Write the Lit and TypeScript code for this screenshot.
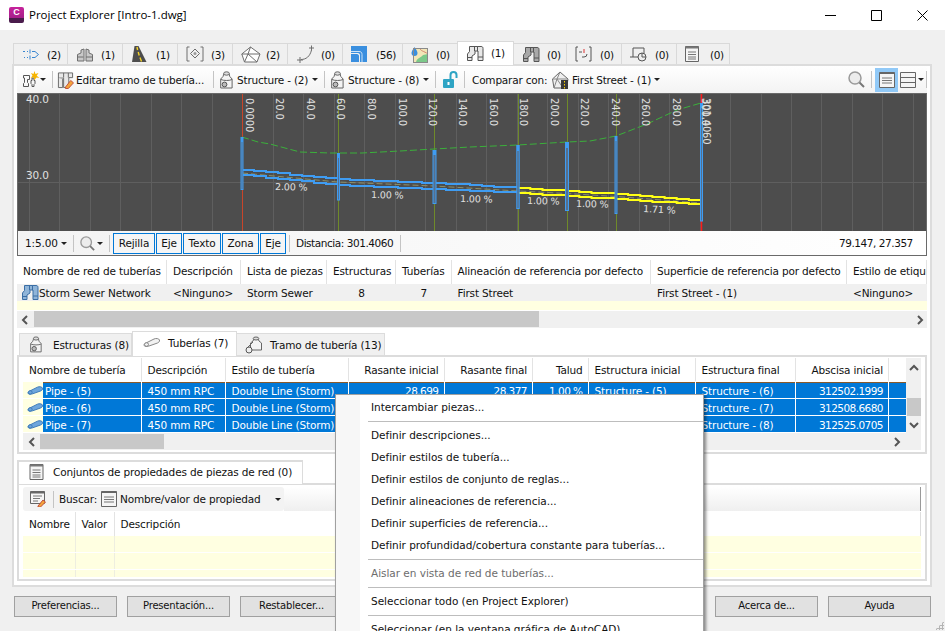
import { LitElement, html, svg, css } from "lit";
import { customElement } from "lit/decorators.js";

const G = "#6e6e6e";

const iAlign = () => html`<svg class="ic" width="18" height="16" viewBox="0 0 18 16"><g fill="none" stroke="#3a86d0"><path d="M1 5.500h2M5 5.500h1M8 3.500v4M10 5.500h3l3.500 3-3.500 3h-3M6 11.500h-1M3 11.500h-1M8 9.500v4"/></g></svg>`;
const iParcel = () => html`<svg class="ic" width="18" height="18" viewBox="0 0 18 18"><g fill="#c9c9c9" stroke="${G}"><path d="M1.500 9.500 5 8V5l3-1v12H1.500z"/><path d="M16.500 9.500 13 8V5l-3-1v12h6.500z"/></g><path d="M1.500 12h6M10 12h6.500" stroke="${G}"/></svg>`;
const iRoad = () => html`<svg class="ic" width="16" height="18" viewBox="0 0 16 18"><path d="M1 17 3.500 1h4l8 16z" fill="#4d4d4d"/><path d="M6 2l.6 3M7.200 7l1 3.500M9 12.500l1.500 4" stroke="#f5d327" stroke-width="1.400"/></svg>`;
const iPoints = () => html`<svg class="ic" width="18" height="16" viewBox="0 0 18 16"><g fill="none" stroke="${G}"><path d="M3.500 1H1v14h2.500M14.500 1H17v14h-2.500"/><path d="M9 3l4.500 4.500L9 12 4.500 7.500z"/></g><circle cx="9" cy="7.500" r="1.500" fill="#999"/></svg>`;
const iSurf = () => html`<svg class="ic" width="20" height="17" viewBox="0 0 20 17"><path d="M9.500 1 19 8l-3 8H3.500L.8 8zM.8 8h18M9.500 1 7 8l-3.500 8M7 8l9 8" fill="#fff" stroke="${G}"/></svg>`;
const iCurve = () => html`<svg class="ic" width="20" height="18" viewBox="0 0 20 18"><path d="M5 14.500c5 0 9-3 10.500-9.500" fill="none" stroke="${G}"/><path d="M1 15h6M4 12v6M13 3h5M15.500 .5v5" stroke="${G}"/></svg>`;
const iCorner = () => html`<svg class="ic" width="16" height="16" viewBox="0 0 16 16"><path d="M0 0h16v16H9V9c0-1-1-2-2-2H0z" fill="#3a8fdf"/><path d="M0 8h6c1 0 2 1 2 2v6H0z" fill="#3a8fdf"/><path d="M0 5.500h8c2 0 3 1 3 3v7.500" fill="none" stroke="#cfe4f7"/></svg>`;
const iMap = () => html`<svg class="ic" width="17" height="18" viewBox="0 0 17 18"><rect x="2" y="3" width="15" height="15" fill="#f2e6b8"/><path d="M5 18c0-5 5-5 7-8l5-1v9z" fill="#7cc98a"/><path d="M9 3c0 3 4 3 8 6" fill="none" stroke="#d58870"/><path d="M3.500 2S.5 6 .5 8a3 3 0 0 0 6 0c0-2-3-6-3-6z" fill="#3a8fdf"/><rect x="2.500" y="3.500" width="14" height="14" fill="none" stroke="#8a8a8a"/></svg>`;
const iNet = (c = "#b0b0b0", s = "#555") => html`<svg class="ic" width="18" height="17" viewBox="0 0 18 17"><g fill=${c} stroke=${s}><path d="M3.500 1.500H12.500V6H9V9L6 11v4.500H1.500V9L3.500 6.500z"/><path d="M11.500 1.500H15c1.500 0 2 .7 2 2v12h-5V6h-.5z"/></g><path d="M1.500 12.500H6M12 12H17M8.500 1.500V6" stroke=${s} fill="none"/></svg>`;
const iBrk = () => html`<svg class="ic" width="17" height="16" viewBox="0 0 17 16"><path d="M3 1H1v14h2M14 1h2v14h-2M4 6h3" fill="none" stroke="#555"/><path d="M12 8a3 3 0 0 1-3 3H7" fill="none" stroke="#555"/><path d="M9 3v4" stroke="#d33"/></svg>`;
const iMon = () => html`<svg class="ic" width="17" height="15" viewBox="0 0 17 15"><path d="M3 10V1h11v5M0 10h8" fill="none" stroke="#555"/><circle cx="12" cy="10" r="4" fill="#eee" stroke="#555"/><path d="M12 6v4h4" stroke="#555" fill="none"/></svg>`;
const iDoc = (w = 14, h = 16) => html`<svg class="ic" width=${w} height=${h} viewBox="0 0 14 16"><path d="M.5.500h13v15H.500z" fill="#f5f5f5" stroke="#666"/><path d="M.5.500h13v2H.500z" fill="#777"/><path d="M3 6h8M3 8.500h8M3 11h8M3 13h8" stroke="#777"/></svg>`;
const iList = () => html`<svg class="ic" width="16" height="16" viewBox="0 0 16 16"><path d="M.5.500h15v15H.500z" fill="#f5f5f5" stroke="#666"/><path d="M.5.500h15v1.500H.500z" fill="#666"/><path d="M3 6h10M3 8.500h10M3 11h10" stroke="#777"/></svg>`;
const iStruct = (w = 13, h = 18) => html`<svg class="ic" width=${w} height=${h} viewBox="0 0 13 18"><path d="M4 2.500 3 5.500.7 8v9h11.400V8L9.800 5.500 9 2.500z" fill="#f4f4f4" stroke="#666"/><ellipse cx="6.500" cy="2.500" rx="2.800" ry="1.700" fill="#ddd" stroke="#666"/><path d="M1 8.500c2 1.300 9 1.300 11 0" fill="none" stroke="#666"/><circle cx="4.500" cy="13.500" r="2.400" fill="#bbb" stroke="#555"/></svg>`;
const iRun = () => html`<svg class="ic" width="20" height="18" viewBox="0 0 20 18"><path d="M9 2.500 8 5 5.500 7v7h11V7L14 5l-1-2.500z" fill="#f4f4f4" stroke="#666"/><ellipse cx="11" cy="2.500" rx="2.800" ry="1.500" fill="#ddd" stroke="#666"/><path d="M3 11l5-5" stroke="#666"/><circle cx="4" cy="14" r="3" fill="#eee" stroke="#555"/></svg>`;
const iPipe = (f = "#f2f2f2", s = "#888", w = 17, h = 9) => html`<svg class="ic" width=${w} height=${h} viewBox="0 0 17 9"><path d="M3 8.500C1 8.500.3 6.500 2 5.500L11 1c2-1 5-.5 5.500 1 .5 1.500-1 2.500-2 3L6 8z" fill=${f} stroke=${s}/><ellipse cx="3.500" cy="6.500" rx="2" ry="1.800" fill=${f} stroke=${s}/></svg>`;
const iNew = () => html`<svg class="ic" width="18" height="18" viewBox="0 0 18 18"><path d="M1.500 4.500h6v4H5.500v3l1 1v3h-5v-3l1-1V7h-1zM9 9.500h1V7h2v2.500h1v3l-1 1v2h-2v-2l-1-1z" fill="none" stroke="#555"/><path d="M12.500 0l1 3 3-1-1.800 2.700L17.500 7l-3-.5-2 2.500-1-2.700L8.500 7l2-2.300L9 2l2.500 1z" fill="#f7b500"/></svg>`;
const iEdit = () => html`<svg class="ic" width="17" height="18" viewBox="0 0 18 18"><path d="M1.500 1.500h15v5h-4V17H7V7H1.500z" fill="#e8e8e8" stroke="#666"/><path d="M1.500 7v10H6V8" fill="#e8e8e8" stroke="#666"/><path d="M7 1.500v5M12 1.500v5" stroke="#666"/><path d="M9 16.500l5.500-7 3 2.500-5.500 6H9z" fill="#f4a53b" stroke="#c04e3c"/></svg>`;
const iLock = () => html`<svg class="ic" width="15" height="17" viewBox="0 0 15 17"><rect x="0" y="8" width="11" height="9" rx="1" fill="#2ea4c4"/><path d="M7.500 8V4a3 3 0 0 1 6 0v3" fill="none" stroke="#2ea4c4" stroke-width="2"/><rect x="4.500" y="11" width="2" height="3" fill="#fff"/></svg>`;
const iComp = () => html`<svg class="ic" width="17" height="18" viewBox="0 0 17 18"><path d="M8 1 16 8l-1.500 9H2L.5 8z" fill="#eee" stroke="#666"/><path d="M.5 8h15M8 1 5 8l-3 9M5 8l6 9" fill="none" stroke="#888"/><rect x="9" y="9" width="7" height="9" fill="#3a3a3a"/><path d="M12.500 10v1.500M12.500 13v1.500M12.500 16v1.500" stroke="#ffd200"/></svg>`;
const iMag = (s = 17) => html`<svg class="ic" width=${s} height=${s} viewBox="0 0 17 17"><circle cx="7" cy="7" r="6" fill="#ececec" stroke="#9a9a9a" stroke-width="1.500"/><path d="M11.500 11.500 16 16" stroke="#777" stroke-width="2"/></svg>`;
const iEditList = () => html`<svg class="ic" width="18" height="16" viewBox="0 0 18 16"><path d="M.5.500h14v12H.500z" fill="#f5f5f5" stroke="#666"/><path d="M.5.500h14v2H.500z" fill="#666"/><path d="M3 5h9M3 7.500h7M3 10h5" stroke="#777"/><path d="M8 15l5-6 2.500 2-5 5H8z" fill="#f4a53b" stroke="#c04e3c"/></svg>`;
const iSplit = () => html`<svg class="ic" width="16" height="16" viewBox="0 0 16 16"><path d="M.5 .5h15v15H.500zM.5 5.500h15M.5 10.500h15" fill="#f5f5f5" stroke="#666"/></svg>`;
const arrow = () => html`<span class="arrow"></span>`;
const sep = (k = "") => html`<span class="tsep ${k}"></span>`;
const chevL = () => html`<svg class="ic" width="8" height="10" viewBox="0 0 8 10"><path d="M6 1 2 5l4 4" fill="none" stroke="#555" stroke-width="2"/></svg>`;
const chevR = () => html`<svg class="ic" width="8" height="10" viewBox="0 0 8 10"><path d="M2 1l4 4-4 4" fill="none" stroke="#555" stroke-width="2"/></svg>`;
const chevU = () => html`<svg class="ic" width="10" height="8" viewBox="0 0 10 8"><path d="M1 6l4-4 4 4" fill="none" stroke="#555" stroke-width="2"/></svg>`;
const chevD = () => html`<svg class="ic" width="10" height="8" viewBox="0 0 10 8"><path d="M1 2l4 4 4-4" fill="none" stroke="#555" stroke-width="2"/></svg>`;
const sp = (w: number) => html`<span class="sp" style="width:${w}px"></span>`;
const tx = (t: string, w: number, k = "") => html`<span class="t ${k}" style="width:${w}px">${t}</span>`;

const TOP_TABS = [
  [iAlign, "(2)", 55], [iParcel, "(1)", 55], [iRoad, "(1)", 55], [iPoints, "(3)", 55], [iSurf, "(2)", 55], [iCurve, "(0)", 55],
  [iCorner, "(56)", 60], [iMap, "(0)", 55], [() => iNet("#e8e8e8"), "(1)", 57], [() => iNet("#a8a8a8"), "(0)", 53], [iBrk, "(0)", 55], [iMon, "(0)", 55], [() => iDoc(), "(0)", 53],
] as [() => any, string, number][];

const STATIONS: [number, string][] = [[250,"0.0000"],[280,"20.0"],[311,"40.0"],[341,"60.0"],[372,"80.0"],[403,"100.0"],[433,"120.0"],[463,"140.0"],[494,"160.0"],[524,"180.0"],[555,"200.0"],[585,"220.0"],[616,"240.0"],[646,"260.0"],[677,"280.0"],[706,"300.0"],[707,"301.4060"]];
const GRIDX = Array.from({ length: 30 }, (_, i) => 29 + i * 30.48);
const TUBES: [number, number, number, number, number][] = [[242,137,141,190,3],[338.5,153,157,200.5,3],[434.5,150,154,204,4],[518,145,150,209,3.5],[567,142,147,211,4],[616,136,140,214,3],[701.5,103,107,221.5,3]];
const SLOPES: [number, number, string, number][] = [[275,190,"2.00 %",1],[371,198,"1.00 %",1],[460,202,"1.00 %",1],[527,204,"1.00 %",1],[576,207,"1.00 %",1],[643,212,"1.71 %",3]];

const stepped = (pts: [number, number][]) => {
  let d = `M${pts[0][0]} ${Math.round(pts[0][1])}`;
  for (let i = 1; i < pts.length; i++) {
    const [x0, y0] = pts[i - 1], [x1, y1] = pts[i];
    const n = Math.max(1, Math.round((x1 - x0) / 12));
    for (let k = 1; k <= n; k++) {
      const x = x0 + ((x1 - x0) * k) / n, y = y0 + ((y1 - y0) * k) / n;
      d += `H${x.toFixed(1)}V${Math.round(y)}`;
    }
  }
  return d;
};

const chart = () => html`<svg class="chart" width="908" height="137" viewBox="18 94 908 137">
  <rect x="18" y="94" width="908" height="137" fill="#4d4d4d"/>
  <g stroke="#5f5f5f">${GRIDX.map((x) => svg`<path d="M${Math.round(x) + 0.5} 93V231"/>`)}<path d="M18 182.500H926"/></g>
  <g stroke="#6f8a2a">${[242.5,338.5,434.5,518.5,567.5,616.5].map((x) => svg`<path d="M${x} 93V231"/>`)}</g>
  <path d="M242.500 93V231" stroke="#d83a2a" opacity="0.85"/><path d="M701.500 93V231" stroke="#ff1a1a" stroke-width="1.500"/>
  <path d="M242 137l16 5 12 2 30 8 30 1 32 0 38-2 34-2 36-2 48-2 49-3 23-1 26-5 31-12 30-14 24-7" fill="none" stroke="#3bb03b" stroke-dasharray="7 3"/>
  <path d="M242 173 338 182 434 186 518 191 567 193.500 616 196.500 701 203" fill="none" stroke="#8a8f6a" stroke-dasharray="6 3"/>
  <g fill="none" stroke-width="2">
    <path d=${stepped([[242,170],[338,179],[434,183],[518,188]])} stroke="#3f9cf2"/>
    <path d=${stepped([[242,175],[338,185],[434,189],[518,193]])} stroke="#3f9cf2"/>
    <path d=${stepped([[518,188],[567,191],[616,194],[701,201]])} stroke="#ffff14"/>
    <path d=${stepped([[518,193],[567,196],[616,199],[701,205]])} stroke="#ffff14"/>
  </g>
  ${TUBES.map(([x, t1, t2, b, w]) => svg`<path d="M${x} ${t1}V${b}" stroke="#3f9cf2" stroke-width=${w}/><path d="M${x} ${t2 + 1}V${b - 1}" stroke="#55708e" stroke-width=${Math.max(w - 2, 0.6)}/>`)}
  <g class="ct">
    <text x="26" y="103">40.0</text><text x="26" y="179">30.0</text>
    ${STATIONS.map(([x, t]) => svg`<text class="st" transform="translate(${x - 4} 98) rotate(90)">${t}</text>`)}
    ${SLOPES.map(([x, y, t, r]) => svg`<text class="sl" transform="translate(${x} ${y}) rotate(${r})">${t}</text>`)}
  </g>
</svg>`;

const PIPE_ROWS = [
  ["Pipe - (5)", "28.699", "28.377", "1.00 %", "Structure - (5)", "Structure - (6)", "312502.1999"],
  ["Pipe - (6)", "", "", "", "", "Structure - (7)", "312508.6680"],
  ["Pipe - (7)", "", "", "", "", "Structure - (8)", "312525.0705"],
];

const MENU: (string | null | [string])[] = [
  "Intercambiar piezas...", null, "Definir descripciones...", "Definir estilos de tubería...", "Definir estilos de conjunto de reglas...",
  "Definir alineaciones de referencia...", "Definir superficies de referencia...", "Definir profundidad/cobertura constante para tuberías...",
  null, ["Aislar en vista de red de tuberías..."], null, "Seleccionar todo (en Project Explorer)", null, "Seleccionar (en la ventana gráfica de AutoCAD)",
];

@customElement("app-root")
export class AppRoot extends LitElement {
  static styles = css`
    :host { display: block; width: 945px; height: 631px; overflow: hidden; position: relative; font: 10.5px/14px "DejaVu Sans", sans-serif; letter-spacing: -0.15px; color: #111; background: #f0f0f0; }
    .ic { display: block; flex: none; }
    .title { height: 30px; background: #fff; display: flex; align-items: center; }
    .logo { width: 15px; height: 16px; margin-left: 9px; border-radius: 2px; background: linear-gradient(#c6239b 0, #a51f8a 11px, #4a1c4c 11px); color: #fff; font: 700 9px/11px "Liberation Sans", sans-serif; text-align: center; }
    .title-text { margin-left: 5px; font: 11.5px/16px "Open Sans", sans-serif; letter-spacing: 0; color: #000; flex: 1; }
    .wc { width: 46px; display: flex; justify-content: center; }
    .wrap { padding: 11px 13px 0 12px; }
    .tabs { display: flex; align-items: flex-end; height: 23px; padding-left: 1px; }
    .tab { box-sizing: border-box; height: 21px; border: 1px solid #d9d9d9; border-bottom: 0; border-left-width: 0; background: #f0f0f0; display: flex; align-items: center; padding-left: 8px; position: relative; }
    .tab:first-child { border-left-width: 1px; }
    .tab.on { height: 24px; background: #fff; border-left-width: 1px; margin-left: -1px; margin-bottom: -1px; z-index: 1; }
    .tab .ct { position: absolute; left: 33px; top: 4px; letter-spacing: -0.4px; }
    .panel { box-sizing: border-box; height: 523px; background: #fff; border: 2px solid #dcdcdc; padding: 0 3px; width: 920px; }
    .frame { border: 1px solid #6a6a6a; }
    .tb { height: 27px; display: flex; align-items: center; background: linear-gradient(#fff, #f3f3f3); box-sizing: border-box; padding-left: 5px; letter-spacing: -0.2px; }
    .tsep { width: 1px; height: 17px; background: #c4c4c4; flex: none; margin: 0 6px; }
    .tsep.n { margin: 0 5px; }
    .tsep.nr { margin: 0 4px 0 6px; }
    .tsep.end { margin: 0 0 0 2px; }
    .arrow { width: 0; height: 0; border: 3px solid transparent; border-top: 3px solid #222; border-bottom: 0; flex: none; display: block; }
    .t { white-space: nowrap; flex: none; display: block; }
    .t.num { letter-spacing: -0.45px; }
    .sp { flex: none; display: block; }
    .chart { display: block; }
    .status { height: 24px; display: flex; align-items: center; background: linear-gradient(90deg,#f3f3f3,#fff); box-sizing: border-box; padding-left: 7px; }
    .tgs { display: flex; width: 174px; margin: 0 -4px 0 -3px; flex: none; }
    .toggle { box-sizing: border-box; height: 21px; border: 1px solid #0078d7; display: flex; align-items: center; justify-content: center; margin-right: 1px; background: #f5f5f5; flex: none; }
    .grid1 { margin-top: 4px; }
    .grid1 .hc { padding-bottom: 2px; }
    .hdr { display: flex; height: 24px; background: #fff; }
    .hc { box-sizing: border-box; display: flex; align-items: center; border-right: 1px solid #e3e3e3; white-space: nowrap; overflow: hidden; padding: 0 6px; flex: none; }
    .hc.r { justify-content: flex-end; padding-right: 5px; }
    .row1 { display: flex; height: 17px; background: #f0f0f0; }
    .c { box-sizing: border-box; flex: none; padding: 0 6px; display: flex; align-items: center; white-space: nowrap; overflow: hidden; }
    .c.m { justify-content: center; }
    .yel { height: 9px; background: #ffffe1; }
    .hs { height: 17px; display: flex; align-items: center; background: #f0f0f0; position: relative; margin-top: 1px; padding: 0 3px 0 4px; justify-content: space-between; }
    .hs .th { position: absolute; left: 17px; width: 505px; top: 0; height: 16px; background: #c8c8c8; }
    .sub { display: flex; align-items: flex-end; height: 24px; margin-top: 3px; padding-left: 2px; }
    .stab { box-sizing: border-box; height: 22px; border: 1px solid #dcdcdc; border-bottom: 0; background: #f0f0f0; display: flex; align-items: center; gap: 11px; padding-left: 10px; white-space: nowrap; }
    .stab + .stab { border-left: 0; }
    .stab.on { height: 25px; background: #fff; border-left: 1px solid #dcdcdc; margin-bottom: -1px; z-index: 1; padding-left: 10px; gap: 8px; padding-bottom: 3px; }
    .stab.run { padding-left: 8px; gap: 5px; }
    .box { box-sizing: border-box; border: 2px solid #dcdcdc; padding: 1px 4px 0 4px; }
    .pipes { height: 99px; display: grid; grid-template-columns: 883px 15px; grid-template-rows: 75px 17px; width: 910px; }
    .pmain { overflow: hidden; min-width: 0; }
    .prow { display: flex; height: 16px; margin-top: 1px; }
    .prow .c { background: #0078d7; color: #fff; border-right: 1px solid #fff; padding-top: 1px; }
    .prow .c.ic0 { background: #ffffe1; padding: 0 0 0 4px; border: 0; width: 20px; }
    .prow .c.r { justify-content: flex-end; padding-right: 5px; letter-spacing: -0.55px; }
    .prow .fill { flex: 1; background: #0078d7; }
    .prow.first .c:not(.ic0), .prow.first .fill { box-shadow: inset 0 1px 0 #8a5a2a; }
    .vs { background: #f0f0f0; display: flex; flex-direction: column; align-items: center; position: relative; justify-content: space-between; padding: 6px 0 4px; box-sizing: border-box; }
    .vs .th { position: absolute; left: 1px; right: 0; top: 40px; height: 18px; background: #c8c8c8; }
    .ps { height: 17px; grid-column: 1 / span 2; background: #f0f0f0; display: flex; align-items: center; justify-content: space-between; position: relative; padding: 0 20px 0 5px; }
    .ps .th { position: absolute; left: 17px; width: 124px; top: 1px; height: 15px; background: #c8c8c8; }
    .btab { display: flex; margin-top: 6px; height: 23px; }
    .bt { box-sizing: border-box; width: 286px; height: 24px; background: #fff; border: 2px solid #dcdcdc; border-bottom: 0; border-right-width: 1px; display: flex; align-items: center; padding: 0 0 2px 10px; gap: 9px; z-index: 1; margin-bottom: -1px; white-space: nowrap; }
    .props { height: 98px; width: 910px; }
    .ptb { margin-top: 1px; height: 24px; display: flex; }
    .ptb .l { width: 261px; flex: none; background: #f3f3f3; border-radius: 3px; display: flex; align-items: center; padding-left: 7px; box-sizing: border-box; }
    .ptb .rr { flex: 1; background: linear-gradient(#fff, #efefef); border-right: 1px solid #999; }
    .phdr { display: flex; height: 24px; margin-top: 1px; border-right: 1px solid #ddd; }
    .yrow { height: 16px; background: #ffffe1; margin-bottom: 1px; display: flex; }
    .yrow.last { height: 7px; margin: 0; }
    .yrow i { display: block; box-sizing: border-box; height: 100%; border-right: 1px solid #eeeee0; }
    .btns { display: flex; gap: 10px; padding: 9px 1px 0 2px; }
    .btn { box-sizing: border-box; width: 103px; height: 21px; border: 1px solid #a0a0a0; background: #e1e1e1; display: flex; align-items: center; justify-content: center; font-size: 10px; letter-spacing: -0.2px; padding-bottom: 1px; }
    .gap { flex: 1; }
    .menu { position: absolute; left: 335px; top: 394px; width: 369px; height: 250px; background: #fff; border: 1px solid #a0a0a0; box-sizing: border-box; box-shadow: 2px 2px 3px rgba(0,0,0,.45); background-image: linear-gradient(90deg, #f7f7f7 24px, #fff 24px); padding-top: 1px; letter-spacing: -0.03px; }
    .mi { height: 22px; display: flex; align-items: center; padding-left: 35px; white-space: nowrap; }
    .mi.dis { color: #6d6d6d; }
    .ms { height: 1px; background: #bdbdbd; margin: 2.5px 0 2.5px 32px; }
    .grip { position: absolute; right: 1px; bottom: 1px; width: 9px; height: 9px; background: radial-gradient(circle, #b5b5b5 1px, transparent 1.2px) 0 0 / 3px 3px; clip-path: polygon(100% 0, 100% 100%, 0 100%); }
    .vb { background: #91c9f7; width: 23px; height: 24px; display: flex; align-items: center; justify-content: center; margin-left: -3px; flex: none; }
    svg text { font: 10.5px "DejaVu Sans", sans-serif; }
    svg text.st { font-size: 10px; }
    svg text.sl { font-size: 9.5px; }
    g.ct text { fill: #e0e0e0; }
  `;

  private hdr(cols: [string, number, boolean?][]) {
    return cols.map(([t, w, r]) => html`<div class="hc ${r ? "r" : ""}" style="width:${w}px">${t}</div>`);
  }

  render() {
    const topCols: [string, number][] = [["Nombre de red de tuberías",150],["Descripción",74],["Lista de piezas",86],["Estructuras",69],["Tuberías",55.5],["Alineación de referencia por defecto",199.5],["Superficie de referencia por defecto",196],["Estilo de etiqueta",80]];
    const pipeCols: [string, number, boolean?][] = [["Nombre de tubería",118.5],["Descripción",84],["Estilo de tubería",123],["Rasante inicial",96,true],["Rasante final",88.5,true],["Talud",55.5,true],["Estructura inicial",107],["Estructura final",100],["Abscisa inicial",93.5,true]];
    return html`
      <div class="title">
        <div class="logo">C</div>
        <div class="title-text">Project Explorer [Intro-1.dwg]</div>
        <div class="wc"><svg class="ic" width="11" height="11" viewBox="0 0 11 11"><path d="M0 5.500h11" stroke="#000"/></svg></div>
        <div class="wc"><svg class="ic" width="11" height="11" viewBox="0 0 11 11"><path d="M.5.500h10v10H.500z" fill="none" stroke="#000"/></svg></div>
        <div class="wc"><svg class="ic" width="11" height="11" viewBox="0 0 11 11"><path d="M.5.500l10 10M10.500.500l-10 10" stroke="#000" fill="none"/></svg></div>
      </div>
      <div class="wrap">
        <div class="tabs">
          ${TOP_TABS.map(([ic, n, w], i) => html`<div class="tab ${i === 8 ? "on" : ""}" style="width:${w}px">${ic()}<span class="ct">${n}</span></div>`)}
        </div>
        <div class="panel">
          <div class="tb">
            ${iNew()}${arrow()}${sep("nr")}${iEdit()}${sp(2)}${tx("Editar tramo de tubería...", 128)}${sp(3)}${sep()}
            ${iStruct()}${sp(4)}${tx("Structure - (2)", 69)}${sp(6)}${arrow()}${sep()}
            ${iStruct()}${sp(4)}${tx("Structure - (8)", 69)}${sp(6)}${arrow()}${sep()}
            ${sp(1)}${iLock()}${sep()}${sp(1)}${tx("Comparar con:", 74)}${sp(6)}${iComp()}${sp(3)}${tx("First Street - (1)", 76)}${sp(6)}${arrow()}
            <span class="gap"></span>
            ${iMag()}${sep()}
            <span class="vb">${iList()}</span>
            ${sp(2)}${iSplit()}${sp(2)}${arrow()}${sep("end")}
          </div>
          <div class="frame">
            ${chart()}
            <div class="status">
              ${tx("1:5.00", 30)}${sp(6)}${arrow()}${sep()}${iMag(15)}${sp(2)}${arrow()}${sep()}
              <div class="tgs">${[["Rejilla",42],["Eje",26],["Texto",38],["Zona",37],["Eje",26]].map(([t, w]) => html`<div class="toggle" style="width:${w}px">${t}</div>`)}</div>
              ${sep()}${tx("Distancia: 301.4060", 98, "num")}${sep()}
              <span class="gap"></span>${tx("79.147, 27.357", 72, "num")}${sp(15)}
            </div>
          </div>
          <div class="grid1">
            <div class="hdr">${this.hdr(topCols)}</div>
            <div class="row1">
              <div class="c" style="width:150px;padding-left:4px">${iNet("#8fb4d8", "#3a6ea5")}Storm Sewer Network</div>
              <div class="c" style="width:74px">&lt;Ninguno&gt;</div>
              <div class="c" style="width:86px">Storm Sewer</div>
              <div class="c m" style="width:69px">8</div>
              <div class="c m" style="width:55.5px">7</div>
              <div class="c" style="width:199.5px">First Street</div>
              <div class="c" style="width:196px">First Street - (1)</div>
              <div class="c" style="width:80px">&lt;Ninguno&gt;</div>
            </div>
            <div class="yel"></div>
            <div class="hs"><span class="th"></span>${chevL()}${chevR()}</div>
          </div>
          <div class="sub">
            <div class="stab" style="width:113px">${iStruct(12, 17)}Estructuras (8)</div>
            <div class="stab on" style="width:105px">${iPipe()}Tuberías (7)</div>
            <div class="stab run" style="width:148px">${iRun()}Tramo de tubería (13)</div>
          </div>
          <div class="box pipes">
            <div class="pmain">
              <div class="hdr" style="height:23px;">${this.hdr(pipeCols)}</div>
              ${PIPE_ROWS.map((r, i) => html`<div class="prow ${i === 0 ? "first" : ""}">
                <div class="c ic0">${iPipe("#6ea6dc", "#3a78b8", 16, 9)}</div>
                <div class="c" style="width:98.5px;padding-left:2px">${r[0]}</div>
                <div class="c" style="width:84px">450 mm RPC</div>
                <div class="c" style="width:123px">Double Line (Storm)</div>
                <div class="c r" style="width:96px">${r[1]}</div>
                <div class="c r" style="width:88.5px">${r[2]}</div>
                <div class="c r" style="width:55.5px">${r[3]}</div>
                <div class="c" style="width:107px">${r[4]}</div>
                <div class="c" style="width:100px">${r[5]}</div>
                <div class="c r" style="width:93.5px">${r[6]}</div>
                <div class="fill"></div>
              </div>`)}
            </div>
            <div class="vs">${chevU()}<span class="th"></span>${chevD()}</div>
            <div class="ps"><span class="th"></span>${chevL()}${chevR()}</div>
          </div>
          <div class="btab"><div class="bt">${iDoc(15, 16)}Conjuntos de propiedades de piezas de red (0)</div></div>
          <div class="box props">
            <div class="ptb">
              <div class="l">${iEditList()}${sep("n")}${tx("Buscar:", 36)}${sp(6)}${iList()}${sp(3)}${tx("Nombre/valor de propiedad", 143)}${sp(12)}${arrow()}</div>
              <div class="rr"></div>
            </div>
            <div class="phdr">${this.hdr([["Nombre",52.5],["Valor",39],["Descripción",300]])}</div>
            ${["", "", "last"].map((k) => html`<div class="yrow ${k}"><i style="width:53px"></i><i style="width:39px"></i></div>`)}
          </div>
        </div>
        <div class="btns">
          <div class="btn">Preferencias...</div><div class="btn">Presentación...</div><div class="btn">Restablecer...</div>
          <span class="gap"></span>
          <div class="btn">Acerca de...</div><div class="btn">Ayuda</div>
        </div>
      </div>
      <div class="menu">
        ${MENU.map((m) => m === null ? html`<div class="ms"></div>` : Array.isArray(m) ? html`<div class="mi dis">${m[0]}</div>` : html`<div class="mi">${m}</div>`)}
      </div>
      <div class="grip"></div>
    `;
  }
}
